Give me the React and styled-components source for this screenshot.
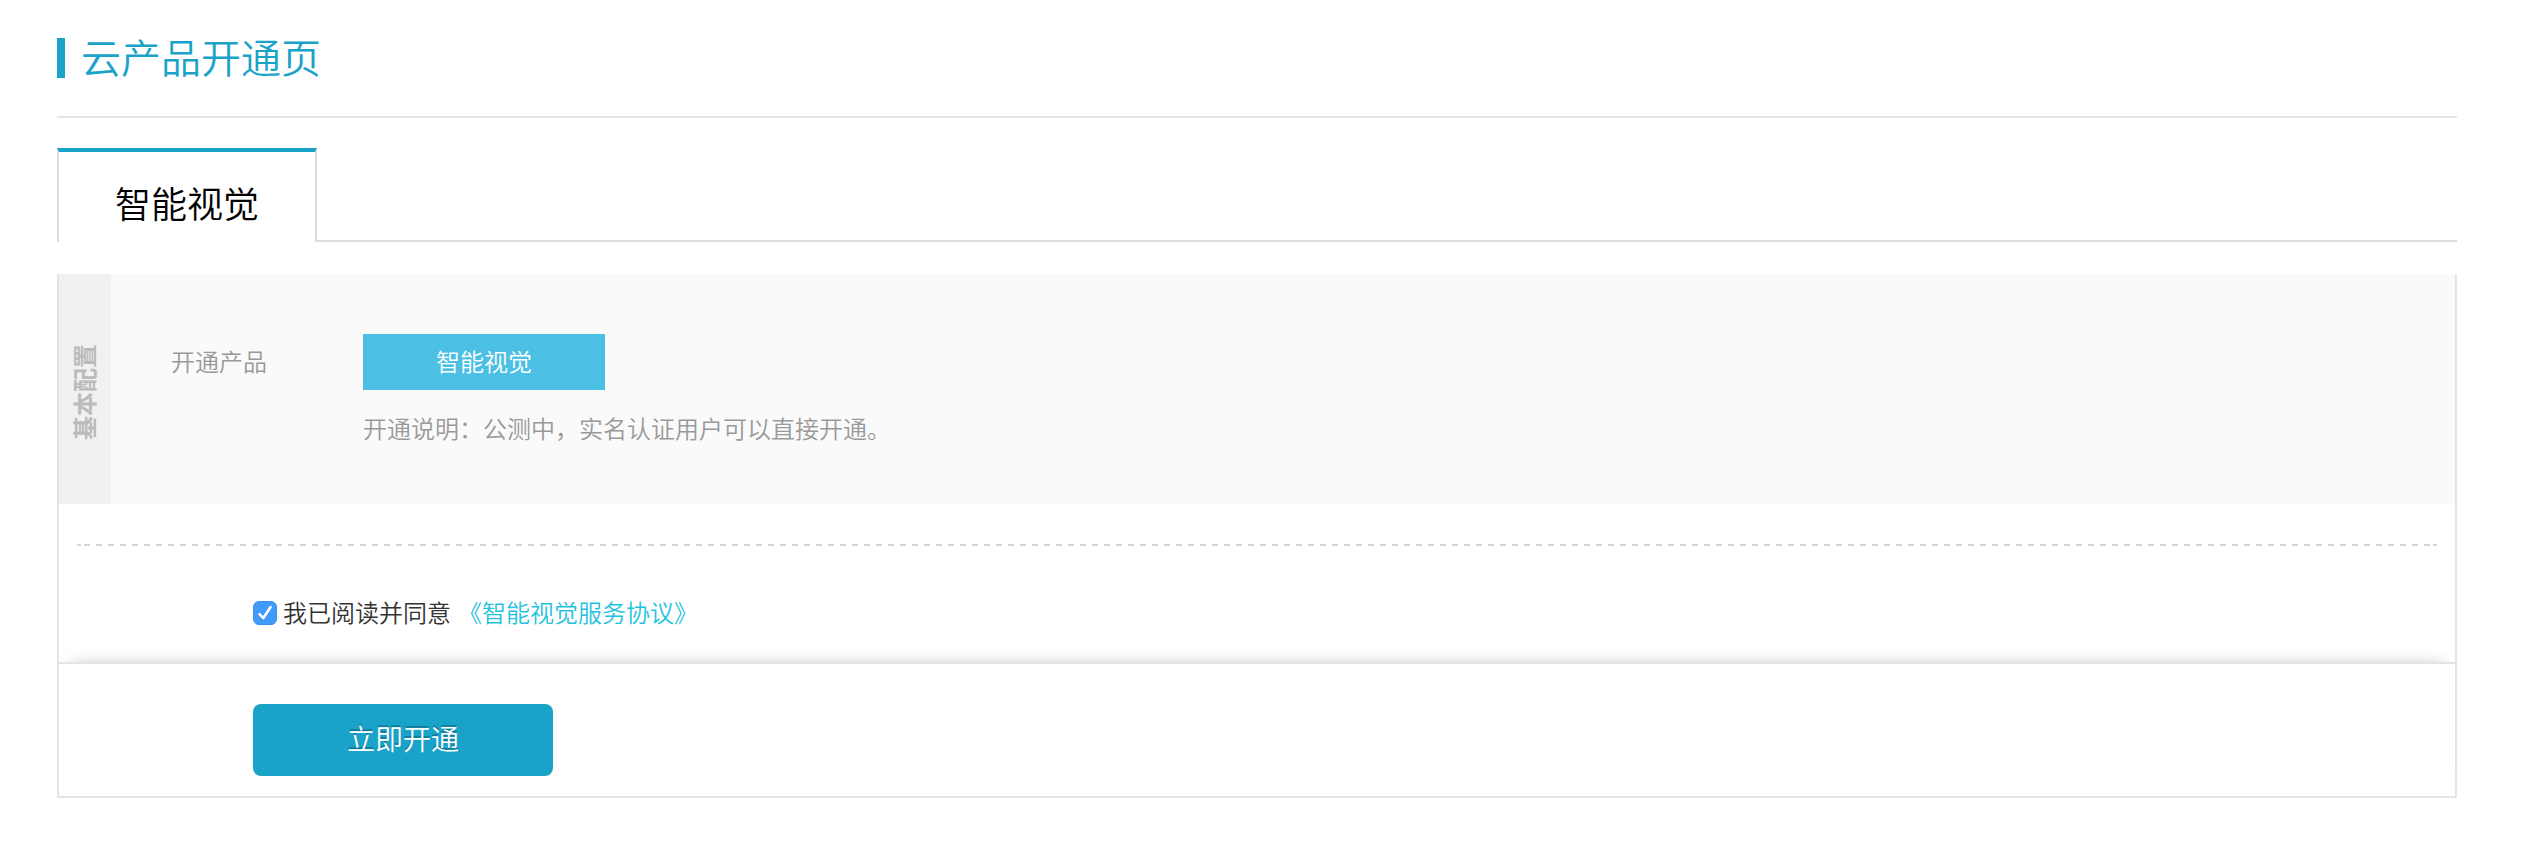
import React, { useState } from 'react'
import styled, { createGlobalStyle } from 'styled-components';

const GlobalStyle=createGlobalStyle`
* {
  box-sizing: border-box;
}
body {
  margin: 0;
  background-color: #fff;
  color: #333;
  font-family: "Noto Sans CJK SC", sans-serif;
  font-size: 24px;
  font-weight: 350;
  line-height: 36px;
}
button, input {
  font: inherit;
}
`;
const Page=styled.main`
 padding: 26px 89px 52px 57px;
`;
const PageHeader=styled.header`
 display: flex;
 align-items: center;
 height: 92px;
 padding-bottom: 26px;
 border-bottom: 2px solid #e4e4e4;
`;
const PageTitle=styled.h1`
 margin: 0;
 padding: 0 0 4px 16px;
 border-left: 8px solid #1aa3c9;
 color: #1aa3c9;
 font-size: 40px;
 font-weight: 350;
 line-height: 36px;
`;
const TabBar=styled.div`
 display: flex;
 margin-top: 30px;
`;
const Tab=styled.button`
 width: 260px;
 height: 94px;
 padding: 10px 0 0;
 border: 2px solid #ddd;
 border-top: 4px solid #1aa3c9;
 border-bottom: 0;
 background-color: #fff;
 color: #000;
 font-size: 36px;
`;
const TabFiller=styled.div`
 flex: 1;
 border-bottom: 2px solid #ddd;
`;
const Panel=styled.form`
 margin-top: 32px;
 border: 2px solid #e4e4e4;
 border-top: 0;
`;
const ConfigSection=styled.section`
 display: flex;
 background-color: #fafafa;
`;
const SectionName=styled.h2`
 display: flex;
 align-items: center;
 justify-content: center;
 width: 52px;
 margin: 0;
 padding: 0 0 6px 2px;
 background-color: #f1f1f1;
 color: #bbb;
 font-size: 24px;
 font-weight: 700;
 writing-mode: vertical-rl;
 transform: rotate(180deg);
`;
const SectionText=styled.span`
 text-orientation: sideways;
`;
const ConfigRow=styled.div`
 display: flex;
 flex: 1;
 padding: 60px 60px 58px;
`;
const ConfigLabel=styled.div`
 width: 192px;
 color: #999;
 line-height: 54px;
`;
const ConfigContent=styled.div`
 flex: 1;
`;
const ProductButton=styled.button`
 display: block;
 width: 242px;
 height: 56px;
 padding: 0 0 2px;
 border: 0;
 background-color: #4bbfe4;
 color: #fff;
`;
const Note=styled.p`
 margin: 20px 0 0;
 color: #999;
`;
const Divider=styled.hr`
 height: 2px;
 margin: 40px 18px 0;
 border: solid #d5d5d5;
 border-width: 0 4px;
 background: repeating-linear-gradient(to right, transparent 0 3px, #d5d5d5 3px 9px, transparent 9px 12px);
`;
const Agreement=styled.div`
 display: flex;
 align-items: center;
 height: 116px;
 padding: 18px 0 0 194px;
`;
const AgreementLabel=styled.label`
 display: flex;
 align-items: center;
 gap: 6px;
`;
const CheckBox=styled.span`
 display: grid;
 width: 24px;
 height: 24px;
 & > * {
   grid-area: 1 / 1;
 }
`;
const CheckInput=styled.input`
 width: 24px;
 height: 24px;
 margin: 0;
 border: 1px solid #3b91ee;
 border-radius: 6px;
 background-color: ${props => props.checked ? "#409bfb" : "#fff"};
 appearance: none;
`;
const CheckMark=styled.svg`
 pointer-events: none;
`;
const AgreementText=styled.span`
 padding-bottom: 2px;
`;
const AgreementLink=styled.a`
 margin-left: 7px;
 padding-bottom: 2px;
 color: #1fc3de;
 text-decoration: none;
`;
const PanelFooter=styled.footer`
 padding: 40px 194px 20px;
 border-top: 2px solid #e4e4e4;
 box-shadow: 0 -12px 12px -12px rgba(0, 0, 0, 0.18);
`;
const SubmitButton=styled.button`
 display: block;
 width: 300px;
 height: 72px;
 padding: 0 0 4px;
 border: 0;
 border-radius: 8px;
 background-color: #1aa3c9;
 color: #fff;
 font-size: 28px;
 text-shadow: 0 -2px 0 rgba(0, 0, 0, 0.25);
`;

const App = () => {
  const [agreed, setAgreed]=useState(true);

  return (
    <Page lang="zh-CN">
      <GlobalStyle />
      <PageHeader>
        <PageTitle>云产品开通页</PageTitle>
      </PageHeader>
      <TabBar>
        <Tab type="button">智能视觉</Tab>
        <TabFiller />
      </TabBar>
      <Panel onSubmit={e => e.preventDefault()}>
        <ConfigSection>
          <SectionName><SectionText>基本配置</SectionText></SectionName>
          <ConfigRow>
            <ConfigLabel>开通产品</ConfigLabel>
            <ConfigContent>
              <ProductButton type="button">智能视觉</ProductButton>
              <Note>开通说明：公测中，实名认证用户可以直接开通。</Note>
            </ConfigContent>
          </ConfigRow>
        </ConfigSection>
        <Divider />
        <Agreement>
          <AgreementLabel>
            <CheckBox>
              <CheckInput type="checkbox" checked={agreed} onChange={e => setAgreed(e.target.checked)} />
              {agreed && (
                <CheckMark width="24" height="24" viewBox="0 0 24 24" fill="none" strokeLinecap="round" strokeLinejoin="round">
                  <path d="M6.5 14.2L10.2 18.2L17.5 7.2" stroke="#2f82dc" strokeOpacity="0.5" strokeWidth="2.6" />
                  <path d="M6.5 13.2L10.2 17.2L17.5 6.2" stroke="#fff" strokeWidth="2.6" />
                </CheckMark>
              )}
            </CheckBox>
            <AgreementText>我已阅读并同意</AgreementText>
          </AgreementLabel>
          <AgreementLink href="#agreement">《智能视觉服务协议》</AgreementLink>
        </Agreement>
        <PanelFooter>
          <SubmitButton type="submit">立即开通</SubmitButton>
        </PanelFooter>
      </Panel>
    </Page>
  )
}

export default App
